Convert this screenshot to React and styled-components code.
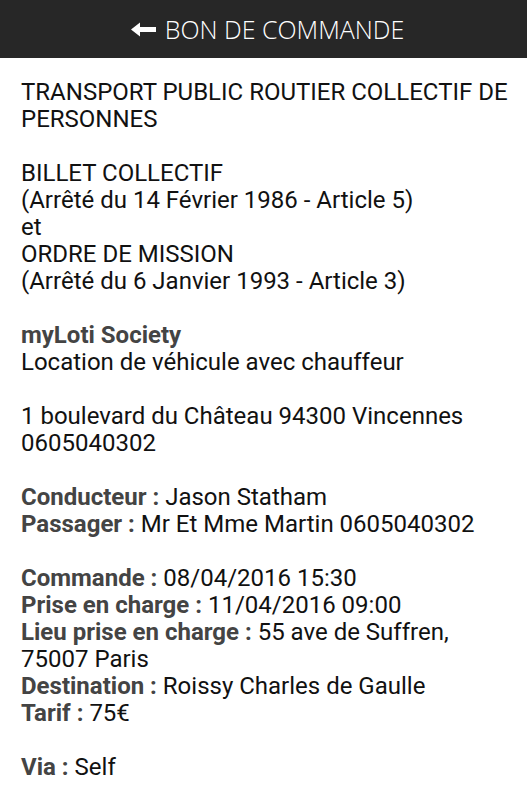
import React from 'react'
import styled, { createGlobalStyle } from 'styled-components'

const Global = createGlobalStyle`
  body {
    margin: 0;
    background: #fff;
    font-family: Roboto, "Noto Sans", sans-serif;
  }
`

const Header = styled.header`
  height: 58px;
  background: #272727;
  display: flex;
  align-items: center;
  justify-content: center;
  gap: 9px;
  padding-left: 8px;
  color: #fff;
  font-family: "Open Sans", sans-serif;
  font-weight: 300;
  font-size: 25px;
  text-transform: uppercase;
`

const Content = styled.main`
  padding: 21px 16px 20px 21px;
  font-size: 24px;
  line-height: 27px;
  color: #111;
`

const Block = styled.p`
  margin: 0 0 27px 0;
`

const Label = styled.b`
  font-weight: 700;
  color: #444;
`

const BackArrow = () => (
  <svg width="25" height="17" viewBox="0 0 25 17">
    <path d="M0 8.5 L9 1.5 L9 6 L25 6 L25 11 L9 11 L9 15.5 Z" fill="#fff" />
  </svg>
)

export default function App() {
  return (
    <>
      <Global />
      <Header>
        <BackArrow />
        <span>Bon de commande</span>
      </Header>
      <Content>
        <Block>TRANSPORT PUBLIC ROUTIER COLLECTIF DE PERSONNES</Block>
        <Block>
          BILLET COLLECTIF<br />
          (Arrêté du 14 Février 1986 - Article 5)<br />
          et<br />
          ORDRE DE MISSION<br />
          (Arrêté du 6 Janvier 1993 - Article 3)
        </Block>
        <Block>
          <Label>myLoti Society</Label><br />
          Location de véhicule avec chauffeur
        </Block>
        <Block>
          1 boulevard du Château 94300 Vincennes<br />
          0605040302
        </Block>
        <Block>
          <Label>Conducteur :</Label> Jason Statham<br />
          <Label>Passager :</Label> Mr Et Mme Martin 0605040302
        </Block>
        <Block>
          <Label>Commande :</Label> 08/04/2016 15:30<br />
          <Label>Prise en charge :</Label> 11/04/2016 09:00<br />
          <Label>Lieu prise en charge :</Label> 55 ave de Suffren, 75007 Paris<br />
          <Label>Destination :</Label> Roissy Charles de Gaulle<br />
          <Label>Tarif :</Label> 75€
        </Block>
        <Block>
          <Label>Via :</Label> Self
        </Block>
      </Content>
    </>
  )
}
